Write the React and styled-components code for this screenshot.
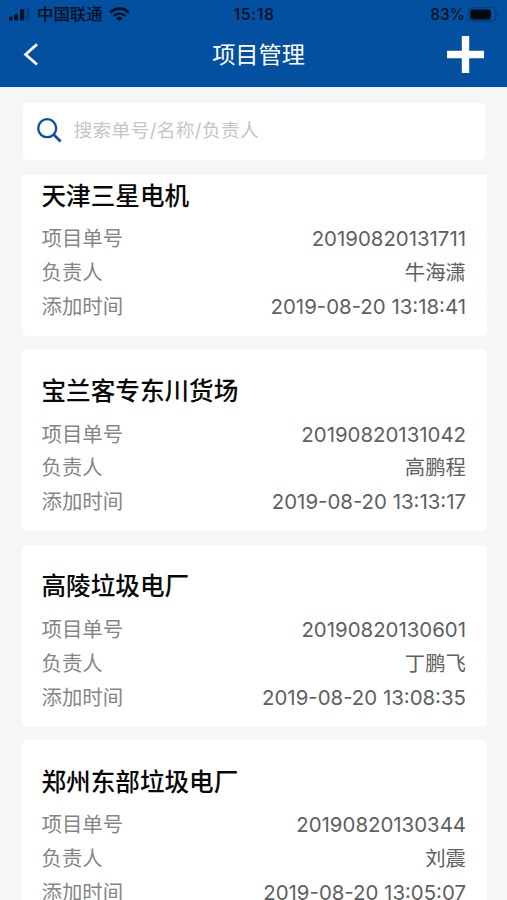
import styled, { createGlobalStyle } from 'styled-components';

const GlobalStyle = createGlobalStyle`
  * {
    box-sizing: border-box;
  }

  body {
    margin: 0;
    background: #f6f6f6;
    font-family: Inter, 'Noto Sans CJK SC', sans-serif;
  }
`;

const StyledPage = styled.div`
  display: flex;
  flex-direction: column;
  height: 100vh;
  overflow: hidden;
`;

const StyledHeader = styled.header`
  flex: none;
  height: 87px;
  background: #0350a0;
`;

const StyledStatusBar = styled.div`
  display: grid;
  grid-template-columns: 1fr auto 1fr;
  align-items: center;
  height: 28px;
  padding: 1px 8px 0 9px;
  color: #021120;
  font-size: 15.5px;
  font-weight: 500;
  line-height: 27px;

  svg {
    flex: none;
  }
`;

const StyledCarrier = styled.div`
  display: flex;
  align-items: center;

  span {
    margin: 0 6px 0 7px;
    font-size: 16.4px;
  }
`;

const StyledTime = styled.div`
  font-size: 16px;
  letter-spacing: 0.6px;
`;

const StyledBattery = styled.div`
  display: flex;
  align-items: center;
  justify-content: flex-end;
  gap: 3px;
`;

const StyledNavBar = styled.div`
  display: grid;
  grid-template-columns: 1fr auto 1fr;
  align-items: center;
  height: 52px;
  padding: 0 23px 0 22px;

  h1 {
    margin: 0;
    padding: 2px 0 0 11px;
    color: #fff;
    font-size: 23.2px;
    font-weight: 400;
    line-height: 50px;
  }
`;

const StyledNavButton = styled.button`
  display: flex;
  justify-self: ${({ $align }) => $align};
  padding: 0;
  border: 0;
  background: none;
`;

const StyledSearch = styled.label`
  display: flex;
  flex: none;
  align-items: center;
  height: 57.5px;
  margin: 15.5px 22px 14.5px 22.5px;
  padding: 0 0 2px 13px;
  gap: 11px;
  border-radius: 5px;
  background: #fff;

  input {
    flex: 1;
    height: 40px;
    padding: 0;
    border: 0;
    outline: none;
    font-family: inherit;
    font-size: 18.7px;
    letter-spacing: 0.35px;
  }

  input::placeholder {
    color: #c5c5c5;
  }
`;

const StyledList = styled.main`
  flex: 1;
  min-height: 0;
  padding: 0 20px 0 22px;
  overflow: hidden;
`;

const StyledCard = styled.section`
  height: 182px;
  margin-bottom: 13.4px;
  padding: 21.5px 21px 0 19.5px;
  border-radius: 5px;
  background: #fff;

  /* the list is scrolled a little past the first card's top */
  &:first-child {
    margin-top: -20.5px;
  }

  h2 {
    margin: 0 0 5.7px;
    color: #080808;
    font-size: 24.6px;
    font-weight: 500;
    line-height: 41px;
  }
`;

const StyledRow = styled.div`
  display: flex;
  justify-content: space-between;
  color: #606060;
  font-size: 20.4px;
  line-height: 33.8px;

  span:first-child {
    color: #858585;
  }
`;

const projects = [
  { name: '天津三星电机', no: '20190820131711', owner: '牛海潇', time: '2019-08-20 13:18:41' },
  { name: '宝兰客专东川货场', no: '20190820131042', owner: '高鹏程', time: '2019-08-20 13:13:17' },
  { name: '高陵垃圾电厂', no: '20190820130601', owner: '丁鹏飞', time: '2019-08-20 13:08:35' },
  { name: '郑州东部垃圾电厂', no: '20190820130344', owner: '刘震', time: '2019-08-20 13:05:07' },
];

function SignalIcon() {
  return (
    <svg width="21" height="13" viewBox="0 0 21 13" fill="currentColor">
      <rect x="0" y="8.7" width="3.7" height="3.8" rx="1" />
      <rect x="5.2" y="6" width="3.8" height="6.5" rx="1" />
      <rect x="11" y="1.3" width="4.3" height="11.2" rx="1" />
      <rect x="17.3" y="0" width="3.3" height="12.5" rx="1" opacity="0.2" />
    </svg>
  );
}

function WifiIcon() {
  return (
    <svg width="21" height="15" viewBox="0 0 21 15" fill="none" stroke="currentColor">
      <path d="M1.2 5.4a13.2 13.2 0 0 1 18.6 0" strokeWidth="2.8" />
      <path d="M4.6 9a8.4 8.4 0 0 1 11.8 0" strokeWidth="2.4" />
      <path d="M10.5 14.3 7.2 11.2a4.7 4.7 0 0 1 6.6 0z" fill="currentColor" stroke="none" />
    </svg>
  );
}

function BatteryIcon() {
  return (
    <svg width="31" height="15" viewBox="0 0 31 15">
      <rect x="0.7" y="0.7" width="27" height="13.4" rx="3.5" fill="none" stroke="#033d79" strokeWidth="1.2" />
      <rect x="2.3" y="2.4" width="20.5" height="10" rx="2" fill="#020a12" />
      <path d="M29 5c1.8.7 1.8 4.3 0 5z" fill="#033d79" />
    </svg>
  );
}

function ProjectCard({ name, no, owner, time }) {
  return (
    <StyledCard>
      <h2>{name}</h2>
      <StyledRow>
        <span>项目单号</span>
        <span>{no}</span>
      </StyledRow>
      <StyledRow>
        <span>负责人</span>
        <span>{owner}</span>
      </StyledRow>
      <StyledRow>
        <span>添加时间</span>
        <span>{time}</span>
      </StyledRow>
    </StyledCard>
  );
}

export default function App() {
  return (
    <StyledPage>
      <GlobalStyle />
      <StyledHeader>
        <StyledStatusBar>
          <StyledCarrier>
            <SignalIcon />
            <span>中国联通</span>
            <WifiIcon />
          </StyledCarrier>
          <StyledTime>15:18</StyledTime>
          <StyledBattery>
            83%
            <BatteryIcon />
          </StyledBattery>
        </StyledStatusBar>
        <StyledNavBar>
          <StyledNavButton $align="start">
            <svg width="17" height="24" viewBox="0 0 17 24" fill="none" stroke="#fff" strokeWidth="2.8">
              <path d="M15 2.2 3.6 12.5 15 22.5" />
            </svg>
          </StyledNavButton>
          <h1>项目管理</h1>
          <StyledNavButton $align="end">
            <svg width="37" height="37" viewBox="0 0 37 37" stroke="#fff" strokeWidth="7.4">
              <path d="M18.5 0v37M0 18.5h37" />
            </svg>
          </StyledNavButton>
        </StyledNavBar>
      </StyledHeader>
      <StyledSearch>
        <svg width="27" height="27" viewBox="0 0 27 27" fill="none" stroke="#0b50a0" strokeWidth="2.3">
          <circle cx="11.2" cy="11.2" r="9" />
          <path d="m17.6 17.6 7 7" strokeWidth="2.8" />
        </svg>
        <input placeholder="搜索单号/名称/负责人" />
      </StyledSearch>
      <StyledList>
        {projects.map((project) => (
          <ProjectCard key={project.no} {...project} />
        ))}
      </StyledList>
    </StyledPage>
  );
}
